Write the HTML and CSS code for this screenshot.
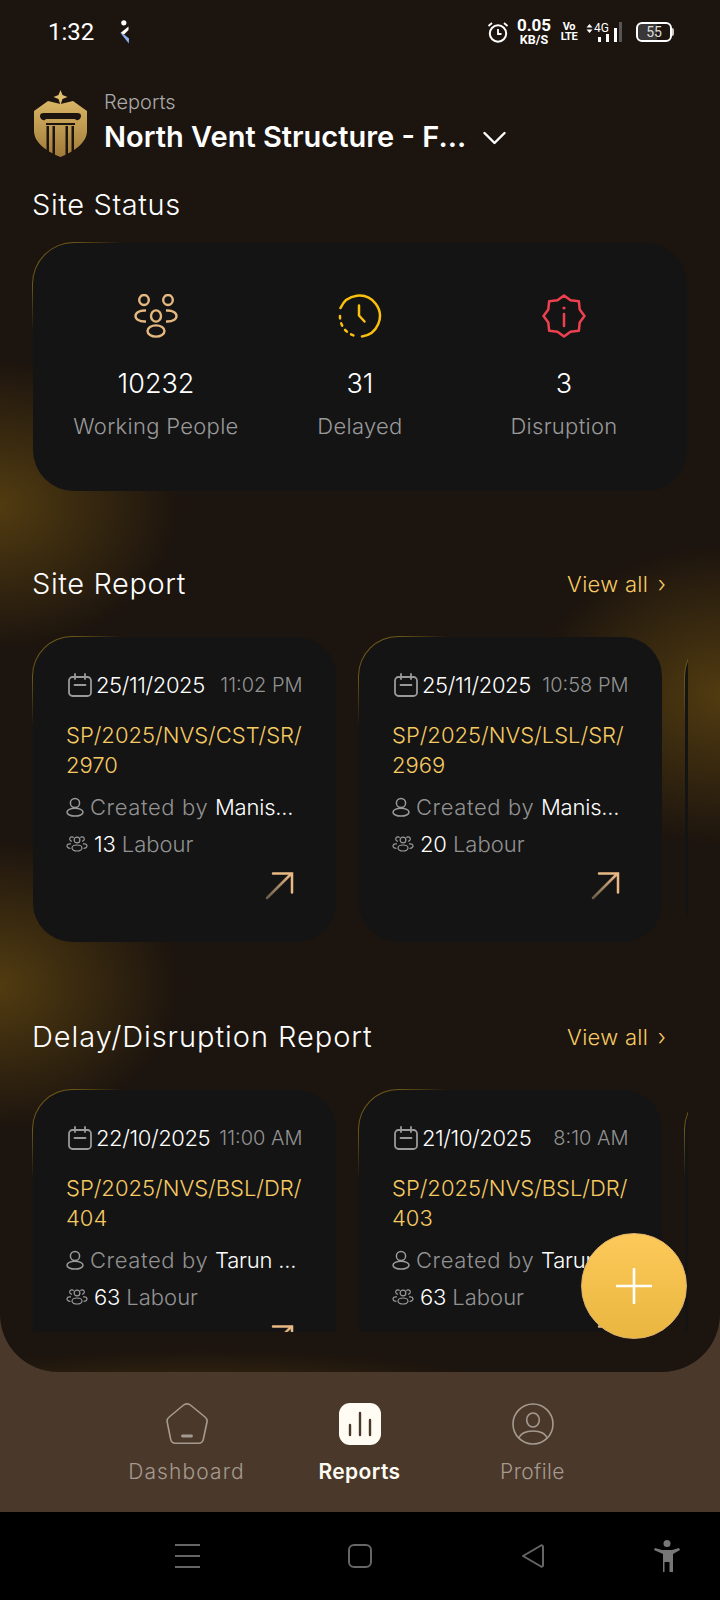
FILE: index.html
```html
<!DOCTYPE html>
<html lang="en">
<head>
  <meta charset="UTF-8">
  <meta name="viewport" content="width=device-width, initial-scale=1.0">
  <title>Reports</title>
  <link rel="stylesheet" href="styles.css">
</head>
<body>
  <svg class="sprite" width="0" height="0">
    <defs>
      <linearGradient id="goldGrad" x1="0" y1="0" x2="0" y2="1">
        <stop offset="0" stop-color="#d9b565"/>
        <stop offset="1" stop-color="#a07a38"/>
      </linearGradient>
      <linearGradient id="arrowGrad" gradientUnits="userSpaceOnUse" x1="2" y1="27" x2="26" y2="3">
        <stop offset="0" stop-color="#6b5b48"/>
        <stop offset="1" stop-color="#e9b985"/>
      </linearGradient>
      <symbol id="i-cal" viewBox="0 0 24 24">
        <rect x="1" y="4" width="22" height="19" rx="3.5" fill="none" stroke="#9a9a9a" stroke-width="1.8"/>
        <path d="M7 1v5M17 1v5M6.5 12h11" fill="none" stroke="#9a9a9a" stroke-width="1.8" stroke-linecap="round"/>
      </symbol>
      <symbol id="i-user" viewBox="0 0 18 20">
        <circle cx="9" cy="6" r="4.6" fill="none" stroke="#9a9a9a" stroke-width="1.5"/>
        <ellipse cx="9" cy="15.2" rx="8" ry="3.9" fill="none" stroke="#9a9a9a" stroke-width="1.5"/>
      </symbol>
      <symbol id="i-group" viewBox="0 0 22 16">
        <g fill="none" stroke="#9a9a9a" stroke-width="1.2">
          <circle cx="11" cy="4" r="2.9"/>
          <path d="M6 5.2a2.2 2.2 0 1 1 1.6-3.6M16 5.2a2.2 2.2 0 1 0-1.6-3.6"/>
          <ellipse cx="11" cy="12" rx="5" ry="3"/>
          <path d="M4.5 12.5C2 12.3.8 11 1 9.6 1.2 8.4 3 7.6 5 7.9M17.500 12.500c2.500-.2 3.700-1.500 3.500-2.900-.2-1.200-2-2-4-1.700"/>
        </g>
      </symbol>
      <symbol id="i-arrow" viewBox="0 0 29 29">
        <path d="M2 27L26 3" fill="none" stroke="url(#arrowGrad)" stroke-width="2.500" stroke-linecap="round"/>
        <path d="M8 2.500h19v19" fill="none" stroke="#e9b985" stroke-width="2.500" stroke-linecap="round"/>
      </symbol>
    </defs>
  </svg>

  <div class="page">
    <div class="app">
      <div class="panel">
        <div class="scroll">
          <div class="status">
            <span class="time">1:32</span>
            <svg class="klogo" width="10" height="24" viewBox="0 0 10 24">
              <circle cx="3.800" cy="2.800" r="2.600" fill="#fff"/>
              <path d="M8.500 6.500L.5 13l3.500 1.500 4.500-4.500z" fill="#fff"/>
              <path d="M.5 13L4 14.500l5 4-.2 5z" fill="#8fb0f5"/>
            </svg>
            <div class="status-right">
              <svg class="alarm" width="22" height="22" viewBox="0 0 22 22">
                <circle cx="11" cy="12.500" r="8.200" fill="none" stroke="#fff" stroke-width="2"/>
                <path d="M11 8v5h3.500" fill="none" stroke="#fff" stroke-width="1.800"/>
                <path d="M1.500 5L5 2M20.500 5L17 2" stroke="#fff" stroke-width="1.800"/>
              </svg>
              <div class="speed"><span class="speed-num">0.05</span><span class="speed-unit">KB/S</span></div>
              <div class="volte"><span>Vo</span><span>LTE</span></div>
              <div class="net">
                <div class="net-top">
                  <svg width="7" height="9" viewBox="0 0 7 9"><path d="M3.500 0l3 3.500H.5zM3.500 9l3-3.500H.5z" fill="#fff"/></svg>
                  <span>4G</span>
                </div>
                <svg class="bars" width="19" height="14" viewBox="0 0 19 14">
                  <rect x="0" y="9" width="3" height="5" fill="#fff"/>
                  <rect x="8" y="6" width="3" height="8" fill="#fff"/>
                  <rect x="16" y="0" width="3" height="14" fill="#fff"/>
                </svg>
              </div>
              <span class="net-bar"></span>
              <div class="battery"><span>55</span></div>
              <span class="battery-nub"></span>
            </div>
          </div>

          <div class="head">
            <svg class="logo" width="54" height="68" viewBox="0 0 54 68">
              <path d="M26.500 1l2 5 5 2-5 2-2 6-2-6-5-2 5-2z" fill="#e0c070"/>
              <path d="M0 22L14 12l12.500 3L39 12l14 10v20c0 12-14 21-26.500 26C14 63 0 54 0 42z" fill="url(#goldGrad)"/>
              <path d="M6 27c0-2 1-3 4-3h33c3 0 4 1 4 3s-2 5-5 4c0-1-1-1-3-1H14c-2 0-3 0-3 1-3 1-5-2-5-4z" fill="#1c140e"/>
              <path d="M12 34h29v2H12zM12.500 37h2.500v28l-2.500-2zM18.500 37h2.500v30l-2.500-1zM31.500 37H34v29l-2.500 1zM37.500 37H40v26l-2.500 2z" fill="#1c140e"/>
            </svg>
            <div class="head-text">
              <div class="head-sub">Reports</div>
              <div class="head-title">North Vent Structure - F...
                <svg class="chev" width="23" height="14" viewBox="0 0 23 14"><path d="M1.500 2l10 10 10-10" fill="none" stroke="#fff" stroke-width="2.400" stroke-linecap="round" stroke-linejoin="round"/></svg>
              </div>
            </div>
          </div>

          <h2 class="title first">Site Status</h2>
          <div class="stats glow-border">
            <div class="stat">
              <svg width="44" height="44" viewBox="0 0 44 44">
                <g fill="none" stroke="#e5b87f" stroke-width="2.400">
                  <ellipse cx="10" cy="6" rx="4.800" ry="5"/>
                  <ellipse cx="34" cy="6" rx="4.800" ry="5"/>
                  <ellipse cx="22" cy="22" rx="5" ry="5.600"/>
                  <ellipse cx="22" cy="37" rx="8.500" ry="5.600"/>
                  <path d="M12 16.500C5 16 1.500 19 1.500 22s3.500 6 10.500 5.500M32 16.500c7-.5 10.500 2.500 10.500 5.500s-3.500 6-10.500 5.500"/>
                </g>
              </svg>
              <div class="stat-num">10232</div>
              <div class="stat-label">Working People</div>
            </div>
            <div class="stat">
              <svg width="44" height="44" viewBox="0 0 44 44">
                <g fill="none" stroke="#fbbf0e" stroke-width="2.500" stroke-linecap="round" stroke-linejoin="round">
                  <path d="M2.500 14A20.500 20.500 0 1 1 24 42.400"/>
                  <path d="M2 22a20 20 0 0 0 17 20.300" stroke-dasharray="2.500 5"/>
                  <path d="M21 11.500v10l5.500 6"/>
                </g>
              </svg>
              <div class="stat-num">31</div>
              <div class="stat-label">Delayed</div>
            </div>
            <div class="stat">
              <svg width="44" height="44" viewBox="0 0 44 44">
                <path d="M22 1.500l6.500 4.800 8.350.85.850 8.350L42.500 22l-4.800 6.500-.85 8.350-8.350.85L22 42.500l-6.500-4.800-8.350-.85-.85-8.350L1.500 22l4.800-6.500.85-8.350 8.350-.85z" fill="none" stroke="#ef4050" stroke-width="2.500" stroke-linejoin="round"/>
                <path d="M22 20v12" stroke="#ef4050" stroke-width="2.500" stroke-linecap="round"/>
                <circle cx="22" cy="14" r="1.600" fill="#ef4050"/>
              </svg>
              <div class="stat-num">3</div>
              <div class="stat-label">Disruption</div>
            </div>
          </div>

          <div class="section-head">
            <h2 class="title">Site Report</h2>
            <span class="view-all">View all <i>&#8250;</i></span>
          </div>
          <div class="row">
            <div class="card glow-border">
              <div class="card-date"><svg class="cal" width="24" height="24"><use href="#i-cal"/></svg><span class="date">25/11/2025</span><span class="clock">11:02 PM</span></div>
              <div class="ref">SP/2025/NVS/CST/SR/<br>2970</div>
              <div class="meta"><svg class="ic-user" width="18" height="20"><use href="#i-user"/></svg>Created by <b>Manis...</b></div>
              <div class="meta labour"><svg class="ic-group" width="22" height="16"><use href="#i-group"/></svg><b>13</b> Labour</div>
              <div class="arrow"><svg width="29" height="29"><use href="#i-arrow"/></svg></div>
            </div>
            <div class="card glow-border">
              <div class="card-date"><svg class="cal" width="24" height="24"><use href="#i-cal"/></svg><span class="date">25/11/2025</span><span class="clock">10:58 PM</span></div>
              <div class="ref">SP/2025/NVS/LSL/SR/<br>2969</div>
              <div class="meta"><svg class="ic-user" width="18" height="20"><use href="#i-user"/></svg>Created by <b>Manis...</b></div>
              <div class="meta labour"><svg class="ic-group" width="22" height="16"><use href="#i-group"/></svg><b>20</b> Labour</div>
              <div class="arrow"><svg width="29" height="29"><use href="#i-arrow"/></svg></div>
            </div>
            <div class="card glow-border"></div>
          </div>

          <div class="section-head second">
            <h2 class="title wide">Delay/Disruption Report</h2>
            <span class="view-all">View all <i>&#8250;</i></span>
          </div>
          <div class="row">
            <div class="card glow-border">
              <div class="card-date"><svg class="cal" width="24" height="24"><use href="#i-cal"/></svg><span class="date">22/10/2025</span><span class="clock">11:00 AM</span></div>
              <div class="ref">SP/2025/NVS/BSL/DR/<br>404</div>
              <div class="meta"><svg class="ic-user" width="18" height="20"><use href="#i-user"/></svg>Created by <b>Tarun ...</b></div>
              <div class="meta labour"><svg class="ic-group" width="22" height="16"><use href="#i-group"/></svg><b>63</b> Labour</div>
              <div class="arrow"><svg width="29" height="29"><use href="#i-arrow"/></svg></div>
            </div>
            <div class="card glow-border">
              <div class="card-date"><svg class="cal" width="24" height="24"><use href="#i-cal"/></svg><span class="date">21/10/2025</span><span class="clock">8:10 AM</span></div>
              <div class="ref">SP/2025/NVS/BSL/DR/<br>403</div>
              <div class="meta"><svg class="ic-user" width="18" height="20"><use href="#i-user"/></svg>Created by <b>Tarun ...</b></div>
              <div class="meta labour"><svg class="ic-group" width="22" height="16"><use href="#i-group"/></svg><b>63</b> Labour</div>
              <div class="arrow"><svg width="29" height="29"><use href="#i-arrow"/></svg></div>
            </div>
            <div class="card glow-border"></div>
          </div>
        </div>
      </div>

      <nav class="nav">
        <div class="nav-item wide">
          <svg width="42" height="42" viewBox="0 0 42 42">
            <path d="M17 2.500L3.200 14c-1.600 1.300-2.400 3-2 5L4.500 35.500c.4 3 2.300 4.800 5 4.800h23c2.700 0 4.600-1.800 5-4.800L41 19c.4-2-.4-3.700-2-5L25 2.500c-2.400-2-5.600-2-8 0z" fill="none" stroke="#a59a90" stroke-width="1.600"/>
            <path d="M16.500 33h9" stroke="#a59a90" stroke-width="2.800" stroke-linecap="round"/>
          </svg>
          <span>Dashboard</span>
        </div>
        <div class="nav-item active">
          <svg width="42" height="42" viewBox="0 0 42 42">
            <rect x="0" y="0" width="42" height="42" rx="11" fill="#fffcf3"/>
            <path d="M11 22v10M21 10v22M31 17v15" stroke="#4a382b" stroke-width="2.400" stroke-linecap="round"/>
          </svg>
          <span>Reports</span>
        </div>
        <div class="nav-item">
          <svg width="42" height="42" viewBox="0 0 42 42">
            <g fill="none" stroke="#a59a90" stroke-width="1.600">
              <circle cx="21" cy="21" r="20"/>
              <ellipse cx="21" cy="17" rx="6.300" ry="7"/>
              <path d="M6.500 35C9 30 15 28 21 28s12 2 14.500 7"/>
            </g>
          </svg>
          <span>Profile</span>
        </div>
      </nav>
    </div>

    <button class="fab" type="button">
      <svg width="36" height="36" viewBox="0 0 36 36"><path d="M18 1v34M1 18h34" stroke="#fff" stroke-width="2.600" stroke-linecap="round"/></svg>
    </button>

    <div class="sysbar">
      <svg class="sys-menu" width="25" height="24" viewBox="0 0 25 24"><path d="M0 1h25M0 12h25M0 23h25" stroke="#666" stroke-width="2"/></svg>
      <svg class="sys-home" width="24" height="24" viewBox="0 0 24 24"><rect x="1" y="1" width="22" height="22" rx="5" fill="none" stroke="#666" stroke-width="2"/></svg>
      <svg class="sys-back" width="24" height="24" viewBox="0 0 24 24"><path d="M2 12L20 1.500c1-.5 2 0 2 1.500v18c0 1.500-1 2-2 1.500z" fill="none" stroke="#666" stroke-width="2" stroke-linejoin="round"/></svg>
      <svg class="sys-person" width="26" height="32" viewBox="0 0 26 32">
        <circle cx="13" cy="3.500" r="3.500" fill="#777"/>
        <path d="M0 10l1-2 7 2h10l7-2 1 2-7 4v18h-3.500V22h-5v10H9V14z" fill="#777"/>
      </svg>
    </div>
  </div>
</body>
</html>
```

FILE: styles.css
```css
* { box-sizing: border-box; }
body { margin: 0; background: #000; font-family: Inter, "Liberation Sans", sans-serif; }
.sprite { display: block; height: 0; }
.page { position: relative; width: 720px; height: 1600px; overflow: hidden; background: #000; }
.app { background: #4a382b; }

/* main dark panel with the gold glows behind the cards */
.panel {
  height: 1372px;
  border-radius: 0 0 58px 58px;
  overflow: hidden;
  background:
    radial-gradient(ellipse 185px 145px at -5px 505px, #523c10 0%, rgba(82, 60, 16, 0) 100%),
    radial-gradient(ellipse 185px 145px at -5px 985px, #523c10 0%, rgba(82, 60, 16, 0) 100%),
    radial-gradient(ellipse 190px 150px at 725px 695px, #523c10 0%, rgba(82, 60, 16, 0) 100%),
    radial-gradient(ellipse 300px 40px at 200px 1390px, #38280f 0%, rgba(56, 40, 15, 0) 100%),
    #1c140e;
}
.scroll { height: 1332px; overflow: hidden; padding-left: 32px; }

/* status bar */
.status { display: flex; align-items: center; height: 64px; padding-left: 16px; color: #fff; font-family: Roboto, sans-serif; }
.time { font-size: 24px; width: 72px; }
.klogo { display: block; }
.status-right { margin-left: auto; margin-right: 46px; display: flex; align-items: center; }
.alarm { display: block; }
.speed { display: flex; flex-direction: column; align-items: center; width: 34px; margin-left: 8px; font-weight: 700; line-height: 1; }
.speed-num { font-size: 17px; }
.speed-unit { font-size: 12.5px; }
.volte { display: flex; flex-direction: column; align-items: center; width: 16px; margin-left: 10px; font-size: 11px; font-weight: 700; line-height: 10px; letter-spacing: -.4px; }
.net { display: flex; flex-direction: column; width: 33px; margin-left: 9px; }
.net-top { display: flex; align-items: center; gap: 1px; height: 12px; font-size: 12px; line-height: 12px; }
.bars { display: block; margin: -6px 0 0 12px; }
.net-bar { width: 3px; height: 20px; background: #555; }
.battery { width: 36px; height: 20px; margin-left: 14px; border: 2px solid #fff; border-radius: 6px; font-size: 14px; line-height: 16px; text-align: center; background: linear-gradient(90deg, #3a3836 60%, transparent 60%); }
.battery span { color: #ddd; }
.battery-nub { width: 2px; height: 8px; background: #ccc; border-radius: 0 2px 2px 0; }

/* header */
.head { display: flex; margin-top: 25px; height: 67px; }
.logo { display: block; margin-left: 2px; }
.head-text { margin-left: 16px; }
.head-sub { font-size: 20px; line-height: 26px; color: #a9a9a9; font-weight: 300; }
.head-title { display: flex; align-items: center; font-size: 29px; line-height: 40px; font-weight: 600; color: #fff; margin-top: 2px; white-space: nowrap; }
.chev { margin-left: 17px; margin-top: 2px; }

.title { margin: 0; font-size: 29px; line-height: 34px; font-weight: 300; color: #fff; letter-spacing: .6px; }
.title.wide { letter-spacing: .95px; }
.title.first { margin-top: 32px; }

/* card look: thin gold edge fading out from the top left corner */
.glow-border {
  border: 1.5px solid transparent;
  background:
    linear-gradient(#141414, #141414) padding-box,
    radial-gradient(circle 90px at 0 0, #6f5717 45%, rgba(111, 87, 23, 0) 100%) border-box;
}

.stats { display: flex; width: 656px; height: 250px; margin-top: 20px; border-radius: 42px; padding: 51px 0 0 21px; }
.stat { width: 204px; display: flex; flex-direction: column; align-items: center; }
.stat-num { margin-top: 28px; font-size: 27px; line-height: 36px; font-weight: 300; color: #fff; }
.stat-label { margin-top: 9px; font-size: 22px; line-height: 30px; color: #9a9a9a; font-weight: 300; letter-spacing: .3px; }

.section-head { display: flex; justify-content: space-between; align-items: center; margin-top: 75px; padding-right: 54px; }
.section-head.second { margin-top: 77px; }
.view-all { display: flex; align-items: center; gap: 3px; white-space: pre; font-size: 22px; color: #f6ca62; font-weight: 300; letter-spacing: .3px; }
.view-all i { font-style: normal; }

.row { display: flex; gap: 21.5px; width: 656px; overflow: hidden; margin-top: 35px; }
.card { flex: none; width: 304.500px; height: 307px; border-radius: 40px; padding: 35px 33px 0 33px; }
.card-date { display: flex; align-items: center; height: 26px; white-space: nowrap; }
.cal { display: block; margin-left: 2px; }
.date { margin-left: 4px; font-size: 22px; font-weight: 300; letter-spacing: -.4px; color: #fff; }
.clock { margin-left: auto; font-size: 20px; color: #929292; font-weight: 300; }
.ref { margin-top: 22px; font-size: 22px; line-height: 30px; color: #f6ca62; font-weight: 300; white-space: nowrap; }
.meta { display: flex; align-items: center; margin-top: 13px; height: 28px; font-size: 22px; font-weight: 300; color: #929292; white-space: pre; letter-spacing: .6px; }
.meta b { font-weight: 300; color: #fff; letter-spacing: -.2px; }
.meta.labour { margin-top: 9px; letter-spacing: 0; }
.ic-user { margin-right: 6px; }
.ic-group { margin-right: 6px; }
.arrow { display: flex; justify-content: flex-end; margin-top: 13px; padding-right: 9px; }

/* floating add button */
.fab {
  position: absolute;
  left: 581px;
  top: 1233px;
  width: 106px;
  height: 106px;
  border: 1px solid #dcb26e;
  border-radius: 50%;
  padding: 0;
  display: flex;
  align-items: center;
  justify-content: center;
  background: linear-gradient(#fdca5a, #e9b640);
}

/* bottom nav */
.nav { display: flex; height: 140px; padding: 31px 0 0 100px; }
.nav-item { width: 173px; display: flex; flex-direction: column; align-items: center; font-size: 21px; color: #a59a90; font-weight: 300; }
.nav-item span { margin-top: 13px; line-height: 28px; letter-spacing: .4px; }
.nav-item.wide span { letter-spacing: 1.1px; }
.nav-item.active { color: #fffcf3; font-weight: 600; }

/* android nav buttons */
.sysbar { display: flex; align-items: center; height: 88px; background: #000; padding-left: 175px; }
.sysbar svg { display: block; }
.sys-home { margin-left: 148px; }
.sys-back { margin-left: 149px; }
.sys-person { margin-left: 109px; }
```
